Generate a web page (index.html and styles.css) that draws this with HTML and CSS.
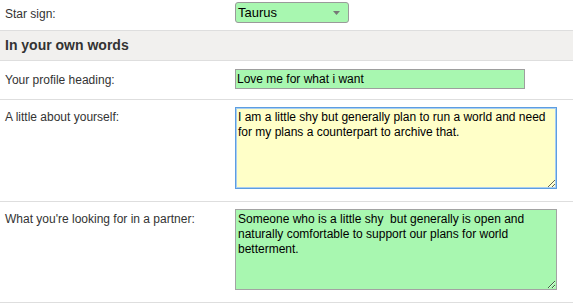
FILE: index.html
```html
<!DOCTYPE html>
<html>
<head>
<meta charset="utf-8">
<link rel="stylesheet" href="styles.css">
</head>
<body>
<div class="form">
  <div class="row row-sign">
    <div class="label">Star sign:</div>
    <div class="select"><span>Taurus</span><svg class="arrow" width="7" height="4" viewBox="0 0 7 4"><path d="M0 0H7L3.5 4Z" fill="#777"/></svg></div>
  </div>
  <div class="band">In your own words</div>
  <div class="row row-heading">
    <div class="label">Your profile heading:</div>
    <input class="text" type="text" value="Love me for what i want">
  </div>
  <div class="row row-area">
    <div class="label">A little about yourself:</div>
    <textarea class="area focus">I am a little shy but generally plan to run a world and need for my plans a counterpart to archive that.</textarea>
  </div>
  <div class="row row-area">
    <div class="label">What you're looking for in a partner:</div>
    <textarea class="area green">Someone who is a little shy  but generally is open and naturally comfortable to support our plans for world betterment.</textarea>
  </div>
</div>
</body>
</html>
```
FILE: styles.css
```css
html, body {
  margin: 0;
  padding: 0;
  background: #fff;
}
body {
  font-family: "Liberation Sans", Arial, sans-serif;
  font-size: 12px;
  color: #333;
}
.row {
  display: flex;
  align-items: flex-start;
  padding-left: 5px;
  border-bottom: 1px solid #dedede;
}
.label {
  width: 230px;
  flex: none;
  line-height: 14px;
  color: #333;
}
.row-sign {
  padding-top: 2px;
  padding-bottom: 7px;
  border-bottom: none;
}
.row-sign .label {
  padding-top: 5px;
}
.select {
  width: 114px;
  height: 21px;
  box-sizing: border-box;
  border: 1px solid #9a9a9a;
  border-radius: 3px;
  background: #a8f7b0;
  color: #000;
  display: flex;
  align-items: center;
  justify-content: space-between;
  padding: 0 8px 0 2px;
  font-size: 13px;
}
.band {
  height: 29px;
  line-height: 29px;
  border-top: 1px solid #dedede;
  border-bottom: 1px solid #dedede;
  background: #f1f0ee;
  padding-left: 5px;
  font-weight: bold;
  font-size: 14px;
  color: #333;
}
.row-heading {
  padding-top: 8px;
  padding-bottom: 10px;
}
.row-heading .label {
  padding-top: 4px;
}
.text {
  width: 290px;
  height: 20px;
  box-sizing: border-box;
  margin: 0;
  border: 1px solid #9e9e9e;
  background: #a8f7b0;
  padding: 0 1px;
  font-family: "Liberation Sans", Arial, sans-serif;
  font-size: 12px;
  color: #000;
  outline: none;
}
.row-area {
  padding-top: 7px;
  padding-bottom: 12px;
}
.row-area .label {
  padding-top: 3px;
}
.area {
  width: 322px;
  height: 82px;
  box-sizing: border-box;
  margin: 0;
  padding: 2px;
  border: 1px solid #a3a3a3;
  font-family: "Liberation Sans", Arial, sans-serif;
  font-size: 12px;
  line-height: 15px;
  color: #000;
  outline: none;
  overflow: hidden;
  display: block;
}
.focus {
  background: #ffffc8;
  border-color: #5c9ee0;
  box-shadow: 0 0 0 1px #a9cdf2 inset;
}
.green {
  background: #a8f7b0;
  height: 81px;
}
```
